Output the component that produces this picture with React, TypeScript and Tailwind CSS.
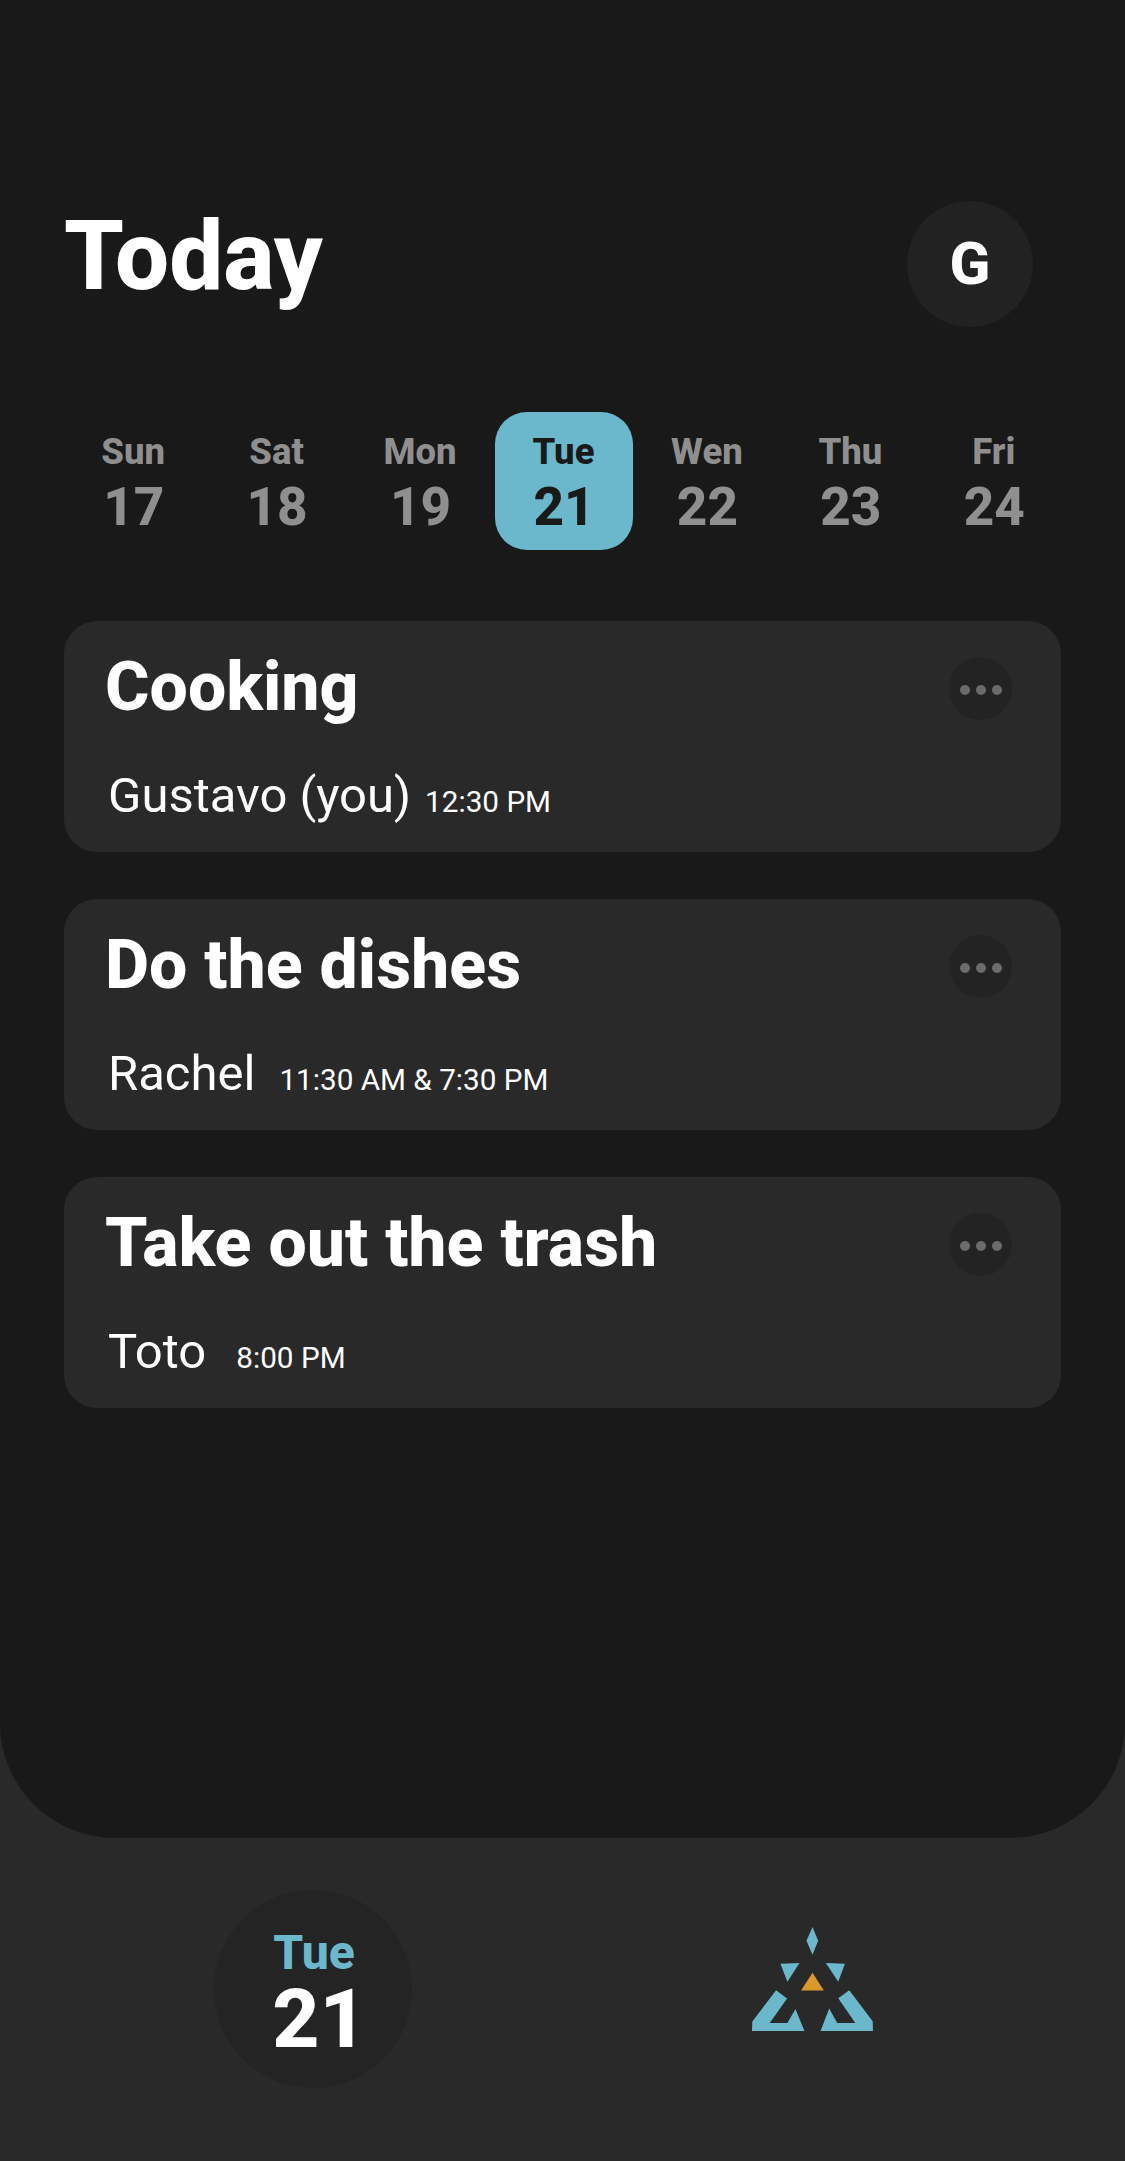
const DAYS = [
  { name: 'Sun', date: 17 },
  { name: 'Sat', date: 18 },
  { name: 'Mon', date: 19 },
  { name: 'Tue', date: 21, active: true },
  { name: 'Wen', date: 22 },
  { name: 'Thu', date: 23 },
  { name: 'Fri', date: 24 },
];

const TASKS = [
  { title: 'Cooking', person: 'Gustavo (you)', time: '12:30 PM', gap: 'gap-[14px]' },
  { title: 'Do the dishes', person: 'Rachel', time: '11:30 AM & 7:30 PM', gap: 'gap-[24px]' },
  { title: 'Take out the trash', person: 'Toto', time: '8:00 PM', gap: 'gap-[30px]' },
];

function Logo() {
  return (
    <svg width="121" height="104" viewBox="156 142 362 311">
      <polygon fill="#6bb8cc" points="337,142 354,183 337,225 319,183" />
      <polygon fill="#6bb8cc" points="241,252 298,250 262,306" />
      <polygon fill="#6bb8cc" points="377,250 434,252 414,306" />
      <polygon fill="#d99a2b" points="337,279 371,332 303,332" />
      <polygon fill="#6bb8cc" points="228,331 261,356 209,429 262,429 286,387 313,453 156,453 157,425" />
      <polygon fill="#6bb8cc" points="447,331 414,355 465,429 411,429 387,386 361,453 518,453 517,424" />
    </svg>
  );
}

function TaskCard({ title, person, time, gap }: { title: string; person: string; time: string; gap: string }) {
  return (
    <div className="flex h-[231px] justify-between rounded-[33px] bg-[#292929] pl-[41px] pr-[49px]">
      <div>
        <h2 className="mt-[26px] text-[68px] leading-[80px] font-extrabold text-white">{title}</h2>
        <p className={`mt-[40px] ml-[3px] flex items-baseline ${gap} text-white`}>
          <span className="text-[49px] leading-[57px]">{person}</span>
          <span className="text-[29.7px] leading-[35px]">{time}</span>
        </p>
      </div>
      <button className="mt-[36px] flex h-[63px] w-[63px] items-center justify-center gap-[6px] rounded-full bg-[#232323] pt-[2px]">
        <span className="h-[10px] w-[10px] rounded-full bg-[#6b6b6b]" />
        <span className="h-[10px] w-[10px] rounded-full bg-[#6b6b6b]" />
        <span className="h-[10px] w-[10px] rounded-full bg-[#6b6b6b]" />
      </button>
    </div>
  );
}

export default function App() {
  return (
    <div className="flex h-[2161px] w-[1125px] flex-col overflow-hidden bg-[#292929] font-['Roboto',sans-serif]">
      <main className="h-[1838px] rounded-b-[115px] bg-[#191919]">
        <header className="flex items-start justify-between pt-[201px] pl-[64px] pr-[92px]">
          <h1 className="-mt-[1px] text-[96px] leading-[112px] font-extrabold text-white">Today</h1>
          <div className="flex h-[126px] w-[126px] items-center justify-center rounded-full bg-[#222222] text-[60px] font-extrabold text-white">
            G
          </div>
        </header>

        <div className="mt-[85px] ml-[62px] grid w-[1004px] grid-cols-7">
          {DAYS.map((day) => (
            <div
              key={day.name}
              className={`mx-auto flex h-[138px] w-[138px] flex-col items-center rounded-[32px] pt-[15px] font-extrabold ${
                day.active ? 'bg-[#6bb8cc] text-[#191919]' : 'text-[#8f8f8f]'
              }`}
            >
              <span className="pr-[1px] text-[36.5px] leading-[50px]">{day.name}</span>
              <span className="text-[53px] leading-[60px]">{day.date}</span>
            </div>
          ))}
        </div>

        <section className="mt-[71px] flex flex-col gap-[47px] pl-[64px] pr-[64px]">
          {TASKS.map((task) => (
            <TaskCard key={task.title} {...task} />
          ))}
        </section>
      </main>

      <footer className="flex items-start justify-between pt-[52px] pl-[214px] pr-[252px]">
        <div className="flex h-[198px] w-[198px] flex-col items-center rounded-full bg-[#242424] pt-[38px] font-extrabold">
          <span className="ml-[2px] text-[48px] leading-[50px] text-[#6bb8cc]">Tue</span>
          <span className="ml-[13px] text-[82px] leading-[82px] text-white">21</span>
        </div>
        <div className="mt-[37px]">
          <Logo />
        </div>
      </footer>
    </div>
  );
}
